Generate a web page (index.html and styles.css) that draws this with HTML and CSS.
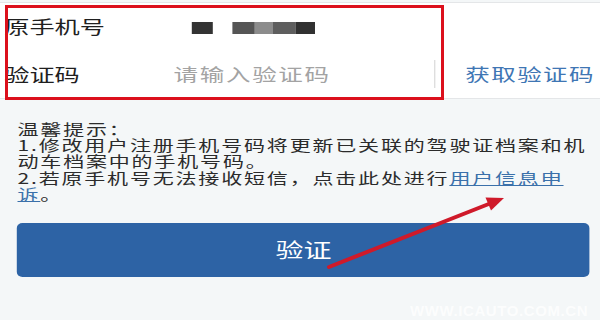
FILE: index.html
```html
<!DOCTYPE html>
<html lang="zh-CN">
<head>
<meta charset="utf-8">
<title>验证</title>
<link rel="stylesheet" href="styles.css">
</head>
<body>
<div class="screen">
  <div class="content">
    <div class="form">
      <div class="row row-phone">
        <div class="label">原手机号</div>
        <div class="masked">
          <span class="blk blk-a"></span>
          <span class="grp">
            <span class="blk blk-b"></span><span class="blk blk-c"></span><span class="blk blk-d"></span><span class="blk blk-e"></span>
          </span>
        </div>
      </div>
      <div class="row row-code">
        <div class="label">验证码</div>
        <div class="placeholder">请输入验证码</div>
        <div class="divider"></div>
        <div class="getcode">获取验证码</div>
      </div>
    </div>
    <div class="tips">
      <p class="tip-line">温馨提示：</p>
      <p class="tip-line">1.修改用户注册手机号码将更新已关联的驾驶证档案和机<br>动车档案中的手机号码。</p>
      <p class="tip-line">2.若原手机号无法接收短信，点击此处进行<a class="link" href="#">用户信息申<br>诉</a>。</p>
    </div>
    <button class="btn" type="button">验证</button>
  </div>
  <div class="mark"></div>
  <svg class="arrow" width="600" height="320" viewBox="0 0 600 320">
    <line x1="329" y1="267" x2="490" y2="203.5" stroke="#cf1a2a" stroke-width="4" stroke-linecap="round"/>
    <polygon points="504,198 491,210.5 485.5,197.5" fill="#cf1a2a"/>
  </svg>
  <div class="watermark">WWW.ICAUTO.COM.CN</div>
</div>
</body>
</html>
```

FILE: styles.css
```css
html, body {
  margin: 0;
  padding: 0;
  background: #f4f7f8;
}

.screen {
  position: relative;
  width: 600px;
  height: 320px;
  overflow: hidden;
  background: #f4f7f8;
  font-family: "Noto Sans CJK SC", "Noto Sans", sans-serif;
}

.content {
  width: 428.57px;
  transform: scaleX(1.4);
  transform-origin: 0 0;
  padding-top: 2px;
}

.form {
  background: #ffffff;
  border-top: 1px solid #e4e6e8;
  border-bottom: 1px solid #e4e6e8;
}

.row {
  display: flex;
  align-items: center;
}

.row-phone {
  height: 46px;
}

.row-code {
  height: 49px;
}

.label {
  width: 121px;
  padding-left: 3px;
  font-size: 18px;
  color: #1f1f1f;
  white-space: nowrap;
}

.masked {
  display: flex;
  align-items: center;
  padding-top: 4px;
}

.blk {
  display: block;
  height: 12px;
}

.blk-a {
  margin-left: 13px;
  width: 15px;
  background: #333333;
}

.grp {
  display: flex;
  margin-left: 14.3px;
}

.blk-b { width: 15.7px; background: #555555; }
.blk-c { width: 12.9px; background: #8c8c8c; }
.blk-d { width: 15.7px; background: #5e5e5e; }
.blk-e { width: 14.3px; background: #313131; }

.placeholder {
  width: 186.4px;
  font-size: 17.5px;
  letter-spacing: 1.2px;
  color: #a3a3a3;
  white-space: nowrap;
}

.divider {
  width: 1px;
  height: 28px;
  background: #dedede;
}

.getcode {
  margin-left: 21px;
  font-size: 17.5px;
  letter-spacing: 1px;
  color: #3f76b4;
  white-space: nowrap;
}

.tips {
  margin-top: 22px;
  padding-left: 12.5px;
}

.tip-line {
  margin: 0;
  font-size: 15px;
  line-height: 16.2px;
  letter-spacing: 1.3px;
  color: #2b2b2b;
  white-space: nowrap;
}

.link {
  color: #3a70aa;
  text-decoration: underline;
}

.btn {
  display: block;
  margin: 20.5px 0 0 12.1px;
  width: 409.3px;
  height: 54px;
  border: none;
  border-radius: 4px / 5px;
  background: #2d63a5;
  color: #ffffff;
  font-family: "Noto Sans CJK SC", "Noto Sans", sans-serif;
  font-size: 20px;
  padding: 0;
}

.mark {
  position: absolute;
  left: 5px;
  top: 5px;
  width: 433px;
  height: 89px;
  border: 3px solid #dc101c;
}

.arrow {
  position: absolute;
  left: 0;
  top: 0;
}

.watermark {
  position: absolute;
  left: 410px;
  top: 302px;
  font-family: "Liberation Sans", Arial, sans-serif;
  font-weight: bold;
  font-size: 15px;
  letter-spacing: 0.6px;
  color: #ffffff;
  opacity: 0.8;
}
```
